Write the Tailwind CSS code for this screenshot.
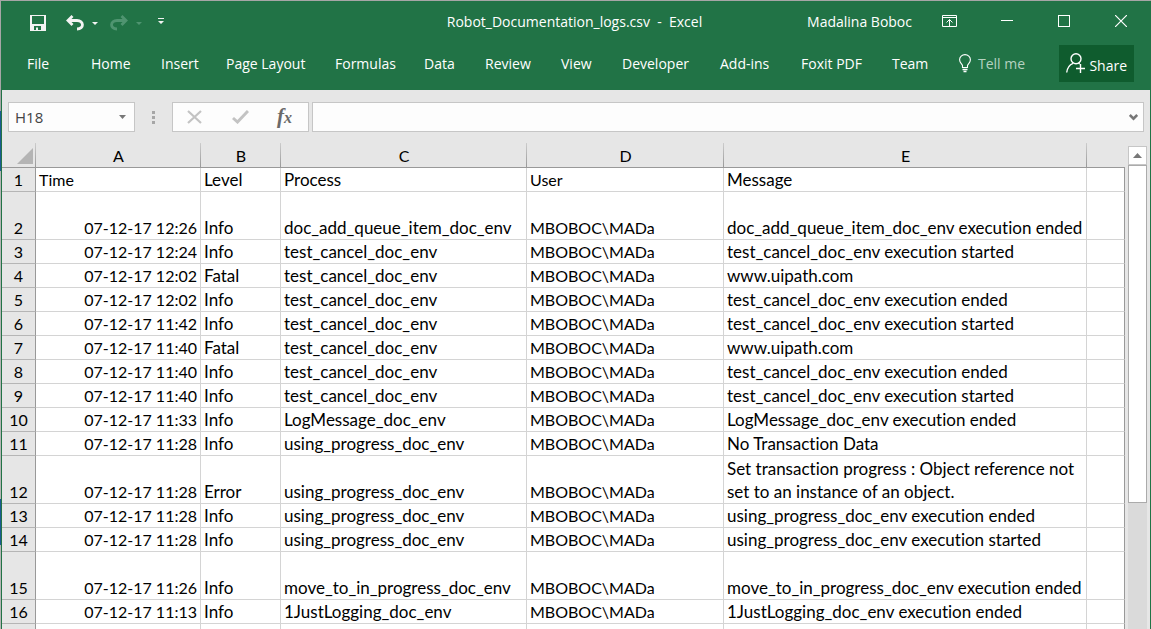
<!DOCTYPE html>
<html lang="en">
<head>
<meta charset="utf-8">
<title>Robot_Documentation_logs.csv - Excel</title>
<script src="https://cdn.jsdelivr.net/npm/@tailwindcss/browser@4"></script>
</head>
<body class="h-screen overflow-hidden bg-[#a6a6a6] bg-[linear-gradient(#a6a6a6_111px,#1b5a91_111px,#1b5a91_171px,#b5b5b5_171px,#b5b5b5_499px,#1b5a91_499px,#1b5a91_545px,#b5b5b5_545px)] pt-px pl-px font-['Open_Sans',sans-serif]">
<div class="flex h-full flex-col overflow-hidden border-x border-[#217346] bg-[#e6e6e6]">

  <header class="shrink-0 bg-[#217346] pb-2 text-[14px] text-white">
    <div class="flex h-10 items-center pl-7">
      <div class="flex flex-1 items-center">
        <button aria-label="Save" class="mr-5"><svg class="mt-1 block" width="16" height="16" viewBox="0 0 16 16" fill="#f3f3f3"><path fill-rule="evenodd" d="M0 0H16V16H0ZM2 1V9H14V1ZM4 11V15H6V12.500H8V15H11V11Z"/></svg></button>
        <button aria-label="Undo"><svg class="mt-1 block" width="18" height="16" viewBox="0 0 18 16" fill="none" stroke="#f3f3f3" stroke-width="2.800"><path d="M6.500 1 2 5.500 6.500 10M2.500 5.500H11C18 5.500 18.500 14 11 14"/></svg></button>
        <button aria-label="Undo history" class="ml-2 mt-1"><svg class="block" width="6" height="3" fill="#f3f3f3"><path d="M0 0H6L3 3Z"/></svg></button>
        <button aria-label="Redo" disabled class="ml-3"><svg class="mt-1 block" width="18" height="16" viewBox="0 0 18 16" fill="none" stroke="#4f9470" stroke-width="2.800"><path d="M11.500 1 16 5.500 11.500 10M15.500 5.500H7C0 5.500 -.5 14 7 14"/></svg></button>
        <button aria-label="Redo history" disabled class="ml-2 mt-1"><svg class="block" width="6" height="3" fill="#4f9470"><path d="M0 0H6L3 3Z"/></svg></button>
        <button aria-label="Customize Quick Access Toolbar" class="ml-4"><svg class="block" width="6" height="6" viewBox="0 0 6 6" fill="#f3f3f3"><path d="M0 0H6V1H0ZM0 3H6L3 6Z"/></svg></button>
      </div>
      <h1 class="pr-2 whitespace-pre">Robot_Documentation_logs.csv  -  Excel</h1>
      <div class="flex flex-1 items-center justify-end pr-[23px]">
        <button class="mr-[30px]">Madalina Boboc</button>
        <button aria-label="Ribbon Display Options" class="mr-11"><svg class="block" width="15" height="12" fill="none" stroke="#fff"><path d="M.5 .5H14.500V11.500H.5ZM0 2.500H15M7.500 11V4.500M4.500 7.500 7.500 4.500 10.500 7.500"/></svg></button>
        <button aria-label="Minimize" class="mr-[45px]"><svg class="block" width="12" height="12" stroke="#fff"><path d="M0 5.500H12"/></svg></button>
        <button aria-label="Maximize" class="mr-[45px]"><svg class="block" width="12" height="12" fill="none" stroke="#fff"><rect x=".5" y=".5" width="11" height="11"/></svg></button>
        <button aria-label="Close"><svg class="block" width="12" height="12" stroke="#fff" stroke-width="1.200"><path d="M0 0 12 12M12 0 0 12"/></svg></button>
      </div>
    </div>

    <div class="flex items-center justify-between pt-1 pr-4 pl-[25px]">
      <nav aria-label="Ribbon" class="grid grid-cols-[64px_70px_65px_109px_89px_61px_76px_61px_98px_81px_91px_67px_auto] justify-items-start whitespace-nowrap">
        <button>File</button><button>Home</button><button>Insert</button><button>Page Layout</button><button>Formulas</button><button>Data</button><button>Review</button><button>View</button><button>Developer</button><button>Add-ins</button><button>Foxit PDF</button><button>Team</button>
        <button class="flex items-center gap-[7px] text-[#b5d2c1]"><svg width="12" height="19" viewBox="0 0 12 19" fill="none" stroke="#fff" stroke-width="1.100"><path d="M3.500 13.500V11.500C2.500 9.500 .6 8.500 .6 5.800A5.400 5.200 0 0 1 11.400 5.800C11.400 8.500 9.500 9.500 8.500 11.500V13.500Z"/><path d="M3.500 15.500H8.500M4.500 17.500H7.500" stroke-width="1.600"/></svg>Tell me</button>
      </nav>
      <button class="flex h-[37px] items-center gap-[3px] bg-[#0f5c2e] px-[7px] pt-[3px]"><svg class="-mt-1" width="20" height="20" viewBox="0 0 20 20" fill="none" stroke="#fff" stroke-width="1.400"><circle cx="10" cy="5.700" r="5"/><path d="M.7 19.500C1.300 14.500 3.500 11.800 7 10.300M12.500 10.200 13.700 11M14.500 11V20M10 15.500H19"/></svg>Share</button>
    </div>
  </header>

  <div class="flex shrink-0 items-center pt-3 pr-1.5 pb-[11px] pl-1.5">
    <div class="flex h-[30px] w-[127px] items-center border border-[#c6c6c6] bg-[#fdfdfd] pr-2 pl-1.5">
      <input aria-label="Name box" value="H18" class="min-w-0 flex-1 text-[15px] text-[#444] outline-none">
      <button aria-label="Name list"><svg class="block" width="7" height="4" fill="#777"><path d="M0 0H7L3.500 4Z"/></svg></button>
    </div>
    <svg class="mx-[17px]" width="3" height="13" fill="#a6a6a6"><path d="M0 0H3V3H0ZM0 5H3V8H0ZM0 10H3V13H0Z"/></svg>
    <div class="flex h-[30px] w-[137px] items-center border border-[#c6c6c6] bg-[#fdfdfd] pl-3.5">
      <button aria-label="Cancel" class="mr-[30px]"><svg class="block" width="15" height="14" stroke="#c3c3c3" stroke-width="2.200"><path d="M1 1 14 13M14 1 1 13"/></svg></button>
      <button aria-label="Enter" class="mr-7"><svg class="block" width="17" height="14" fill="none" stroke="#c3c3c3" stroke-width="3"><path d="M1 8 5.500 12 16 1"/></svg></button>
      <button aria-label="Insert function" class="pb-0.5 font-['Liberation_Serif',serif] text-[21px] leading-none font-bold text-[#6a6a6a] italic">f<span class="text-[16px]">x</span></button>
    </div>
    <div class="ml-[3px] flex h-[30px] flex-1 items-center border border-[#c6c6c6] bg-[#fdfdfd] pr-[5px]">
      <input aria-label="Formula bar" class="min-w-0 flex-1 px-1 outline-none">
      <button aria-label="Expand formula bar"><svg class="block" width="9" height="7" fill="none" stroke="#777" stroke-width="2.600"><path d="M.8 1 4.500 4.700 8.200 1"/></svg></button>
    </div>
  </div>

  <div class="flex min-h-0 flex-1 overflow-hidden">
    <div class="min-w-0 flex-1 overflow-hidden">
      <table class="w-full table-fixed border-separate border-spacing-0 font-['Lato',sans-serif] text-[16px] leading-[23px] text-black [font-variant-ligatures:none] [&_tbody_th]:border-r [&_tbody_th]:border-b [&_tbody_th]:border-r-[#999] [&_tbody_th]:border-b-[#b5b5b5] [&_tbody_th]:bg-[#e6e6e6] [&_tbody_tr]:h-6 [&_td]:border-r [&_td]:border-b [&_td]:border-[#d4d4d4] [&_td]:bg-white [&_td]:px-[3px] [&_td:last-child]:border-r-[#999] [&_td:nth-child(2)]:text-right [&_td:nth-child(3)]:text-[17px] [&_td:nth-child(4)]:text-[17px] [&_td:nth-child(6)]:text-[17px] [&_th]:font-normal [&_tr]:align-bottom">
        <colgroup><col class="w-[34px]"><col class="w-[165px]"><col class="w-[80px]"><col class="w-[246px]"><col class="w-[197px]"><col><col class="w-[38px]"></colgroup>
        <thead>
          <tr class="h-[25px] [&>th]:border-b [&>th]:border-[#999] [&>th]:bg-linear-to-b [&>th]:from-[#ccc] [&>th]:to-[#999] [&>th]:bg-[length:1px_100%] [&>th]:bg-right [&>th]:bg-no-repeat [&>th:last-child]:bg-none">
            <th><button aria-label="Select all" class="ml-auto mr-[3px] mb-[3px] block"><svg class="block" width="16" height="16" fill="#b4b4b4"><path d="M16 0V16H0Z"/></svg></button></th>
            <th scope="col">A</th><th scope="col">B</th><th scope="col">C</th><th scope="col">D</th><th scope="col">E</th><th></th>
          </tr>
        </thead>
        <tbody>
          <tr><th scope="row">1</th><td class="text-left!">Time</td><td>Level</td><td>Process</td><td>User</td><td>Message</td><td></td></tr>
          <tr class="h-12!"><th scope="row">2</th><td>07-12-17 12:26</td><td>Info</td><td>doc_add_queue_item_doc_env</td><td>MBOBOC\MADa</td><td>doc_add_queue_item_doc_env execution ended</td><td></td></tr>
          <tr><th scope="row">3</th><td>07-12-17 12:24</td><td>Info</td><td>test_cancel_doc_env</td><td>MBOBOC\MADa</td><td>test_cancel_doc_env execution started</td><td></td></tr>
          <tr><th scope="row">4</th><td>07-12-17 12:02</td><td>Fatal</td><td>test_cancel_doc_env</td><td>MBOBOC\MADa</td><td>www.uipath.com</td><td></td></tr>
          <tr><th scope="row">5</th><td>07-12-17 12:02</td><td>Info</td><td>test_cancel_doc_env</td><td>MBOBOC\MADa</td><td>test_cancel_doc_env execution ended</td><td></td></tr>
          <tr><th scope="row">6</th><td>07-12-17 11:42</td><td>Info</td><td>test_cancel_doc_env</td><td>MBOBOC\MADa</td><td>test_cancel_doc_env execution started</td><td></td></tr>
          <tr><th scope="row">7</th><td>07-12-17 11:40</td><td>Fatal</td><td>test_cancel_doc_env</td><td>MBOBOC\MADa</td><td>www.uipath.com</td><td></td></tr>
          <tr><th scope="row">8</th><td>07-12-17 11:40</td><td>Info</td><td>test_cancel_doc_env</td><td>MBOBOC\MADa</td><td>test_cancel_doc_env execution ended</td><td></td></tr>
          <tr><th scope="row">9</th><td>07-12-17 11:40</td><td>Info</td><td>test_cancel_doc_env</td><td>MBOBOC\MADa</td><td>test_cancel_doc_env execution started</td><td></td></tr>
          <tr><th scope="row">10</th><td>07-12-17 11:33</td><td>Info</td><td>LogMessage_doc_env</td><td>MBOBOC\MADa</td><td>LogMessage_doc_env execution ended</td><td></td></tr>
          <tr><th scope="row">11</th><td>07-12-17 11:28</td><td>Info</td><td>using_progress_doc_env</td><td>MBOBOC\MADa</td><td>No Transaction Data</td><td></td></tr>
          <tr class="h-12!"><th scope="row">12</th><td>07-12-17 11:28</td><td>Error</td><td>using_progress_doc_env</td><td>MBOBOC\MADa</td><td>Set transaction progress : Object reference not<br>set to an instance of an object.</td><td></td></tr>
          <tr><th scope="row">13</th><td>07-12-17 11:28</td><td>Info</td><td>using_progress_doc_env</td><td>MBOBOC\MADa</td><td>using_progress_doc_env execution ended</td><td></td></tr>
          <tr><th scope="row">14</th><td>07-12-17 11:28</td><td>Info</td><td>using_progress_doc_env</td><td>MBOBOC\MADa</td><td>using_progress_doc_env execution started</td><td></td></tr>
          <tr class="h-12!"><th scope="row">15</th><td>07-12-17 11:26</td><td>Info</td><td>move_to_in_progress_doc_env</td><td>MBOBOC\MADa</td><td class="whitespace-nowrap">move_to_in_progress_doc_env execution ended</td><td></td></tr>
          <tr><th scope="row">16</th><td>07-12-17 11:13</td><td>Info</td><td>1JustLogging_doc_env</td><td>MBOBOC\MADa</td><td>1JustLogging_doc_env execution ended</td><td></td></tr>
          <tr><th></th><td></td><td></td><td></td><td></td><td></td><td></td></tr>
        </tbody>
      </table>
    </div>
    <div class="mt-[3px] mr-[3px] ml-[3px] flex w-[19px] flex-col bg-[#dadada]">
      <button aria-label="Scroll up" class="flex h-[19px] shrink-0 items-center justify-center border border-[#c6c6c6] bg-white"><svg width="9" height="5" fill="#777"><path d="M0 5 4.500 0 9 5Z"/></svg></button>
      <div class="h-[70%] border border-[#ababab] bg-white"></div>
    </div>
  </div>
</div>
</body>
</html>
